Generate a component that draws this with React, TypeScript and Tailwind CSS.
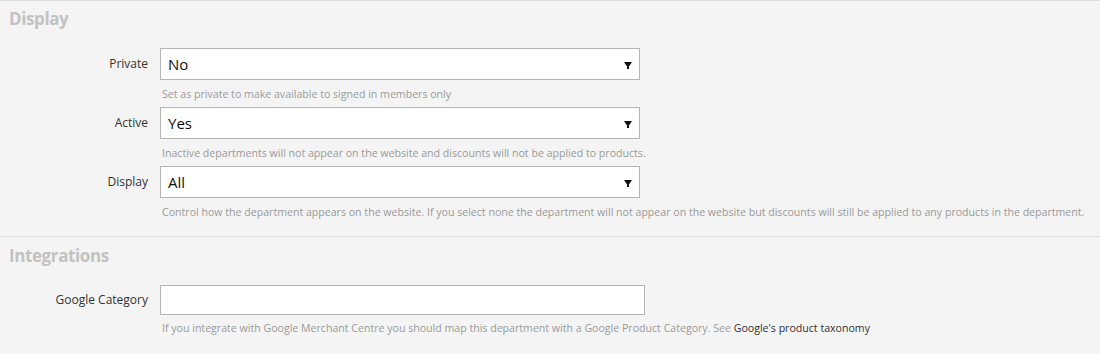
import React from "react";

const font = { fontFamily: '"Open Sans", "Noto Sans", sans-serif' };

function Arrow() {
  return (
    <svg width="8" height="7" viewBox="0 0 8 7" className="absolute right-[7px] top-[13px]">
      <polygon points="0,0 8,0 4,6" fill="#111" />
      <rect x="3" y="5" width="2" height="2" fill="#111" />
    </svg>
  );
}

function SelectRow({ label, value, help }: { label: string; value: string; help: string }) {
  return (
    <div className="flex">
      <div className="w-[148px] shrink-0 h-[32px] flex items-center justify-end text-[12px] text-[#333]">{label}</div>
      <div className="ml-[12px] flex flex-col">
        <div className="relative w-[480px] h-[32px] bg-white border border-[#b5b5b5] flex items-center pl-[7px] text-[15px] text-[#111]">
          {value}
          <Arrow />
        </div>
        <div className="pt-[7px] pb-[6px] pl-[2px] text-[10.6px] leading-[14px] text-[#9a9a9a] whitespace-nowrap">{help}</div>
      </div>
    </div>
  );
}

export default function App() {
  return (
    <div style={font} className="w-[1100px] h-[354px] bg-[#f4f4f4] border-t border-[#dcdcdc] overflow-hidden">
      <div className="pl-[9px] pt-[6px] h-[24px] box-content text-[17px] tracking-[-0.4px] leading-[24px] font-bold text-[#c2c2c2]">Display</div>
      <div className="mt-[17px] flex flex-col">
        <SelectRow label="Private" value="No" help="Set as private to make available to signed in members only" />
        <SelectRow label="Active" value="Yes" help="Inactive departments will not appear on the website and discounts will not be applied to products." />
        <SelectRow
          label="Display"
          value="All"
          help="Control how the department appears on the website. If you select none the department will not appear on the website but discounts will still be applied to any products in the department."
        />
      </div>
      <div className="mt-[11px] border-t border-[#dcdcdc]" />
      <div className="pl-[9px] pt-[7px] text-[17px] tracking-[-0.4px] leading-[24px] font-bold text-[#c2c2c2]">Integrations</div>
      <div className="mt-[17px] flex">
        <div className="w-[148px] shrink-0 h-[30px] flex items-center justify-end text-[12px] text-[#333]">Google Category</div>
        <div className="ml-[12px] flex flex-col">
          <div className="w-[485px] h-[30px] bg-white border border-[#b5b5b5]" />
          <div className="pt-[6px] pl-[2px] text-[10.6px] leading-[14px] text-[#9a9a9a] whitespace-nowrap">
            If you integrate with Google Merchant Centre you should map this department with a Google Product Category. See{" "}
            <span className="text-[#333]">Google's product taxonomy</span>
          </div>
        </div>
      </div>
    </div>
  );
}
